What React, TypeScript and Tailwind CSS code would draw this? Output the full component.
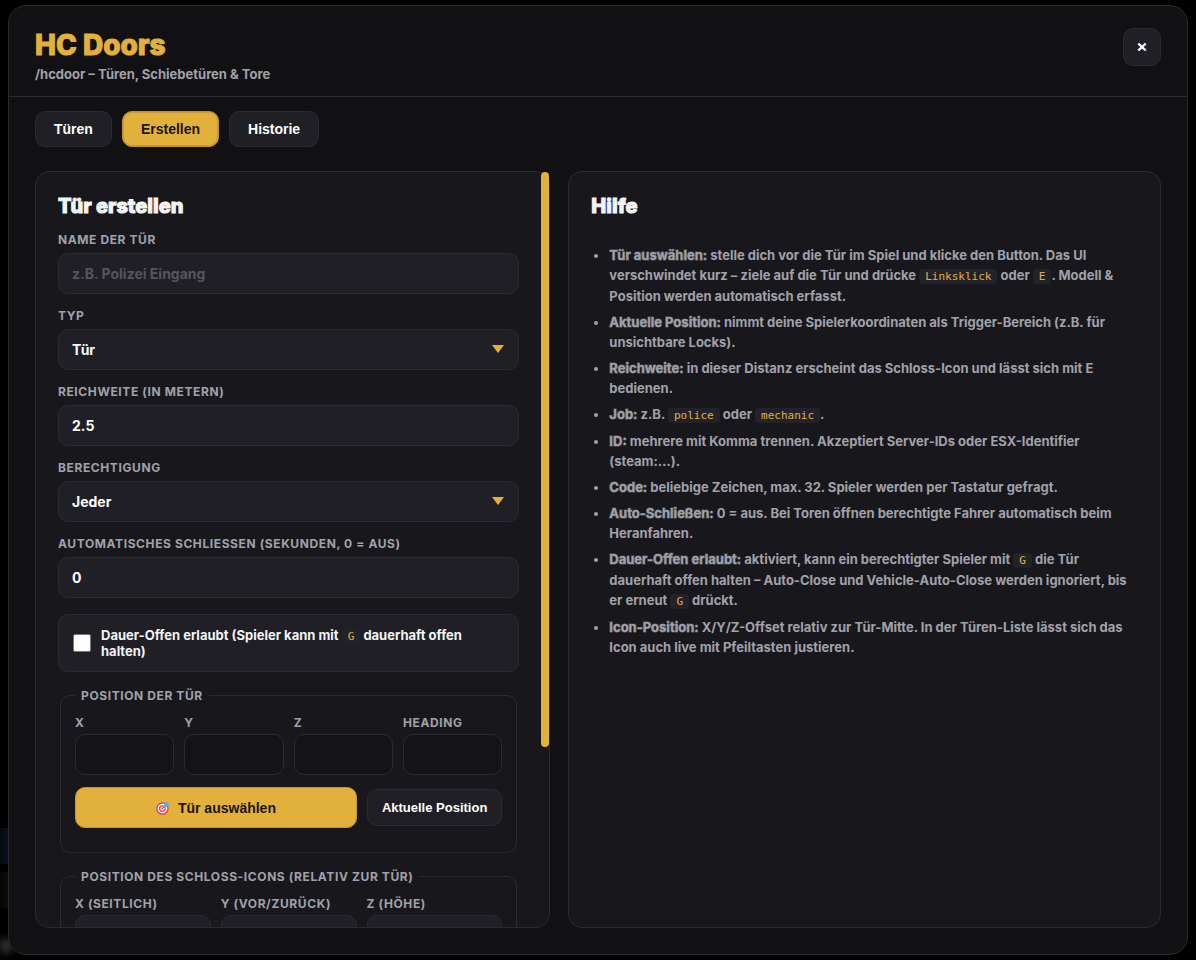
import React, { useState } from 'react';

const labelClass = 'block text-xs leading-[15px] font-bold uppercase tracking-wider text-[#a1a1aa]';
const boxClass =
    'block w-full h-[41px] rounded-[10px] border border-[#2a2a31] px-[13px] text-sm font-bold text-white outline-none placeholder:text-[#55555e]';
const buttonFont = "font-['Liberation_Sans',Arial,sans-serif] font-bold";
const ghostButton = `${buttonFont} rounded-[10px] border border-[#2a2a31] bg-[#1f1f25] text-white`;
const goldButton = `${buttonFont} rounded-[10px] border border-[#c4942c] bg-[#e2b13c] text-[#1a1405]`;

const tabs = ['Türen', 'Erstellen', 'Historie'];

const Code: React.FC<{ children: React.ReactNode }> = ({ children }) => (
    <code className="rounded bg-[#22232a] px-1.5 py-px font-['DejaVu_Sans_Mono',monospace] text-[11px] leading-[18px] font-normal text-[#e2b13c]">
        {children}
    </code>
);

const help = [
    {
        title: 'Tür auswählen:',
        text: (
            <>
                stelle dich vor die Tür im Spiel und klicke den Button. Das UI verschwindet kurz – ziele auf die Tür und
                drücke <Code>Linksklick</Code> oder <Code>E</Code>. Modell &amp; Position werden automatisch erfasst.
            </>
        ),
    },
    { title: 'Aktuelle Position:', text: 'nimmt deine Spielerkoordinaten als Trigger-Bereich (z.B. für unsichtbare Locks).' },
    { title: 'Reichweite:', text: 'in dieser Distanz erscheint das Schloss-Icon und lässt sich mit E bedienen.' },
    {
        title: 'Job:',
        text: (
            <>
                z.B. <Code>police</Code> oder <Code>mechanic</Code>.
            </>
        ),
    },
    { title: 'ID:', text: 'mehrere mit Komma trennen. Akzeptiert Server-IDs oder ESX-Identifier (steam:…).' },
    { title: 'Code:', text: 'beliebige Zeichen, max. 32. Spieler werden per Tastatur gefragt.' },
    { title: 'Auto-Schließen:', text: '0 = aus. Bei Toren öffnen berechtigte Fahrer automatisch beim Heranfahren.' },
    {
        title: 'Dauer-Offen erlaubt:',
        text: (
            <>
                aktiviert, kann ein berechtigter Spieler mit <Code>G</Code> die Tür dauerhaft offen halten – Auto-Close
                und Vehicle-Auto-Close werden ignoriert, bis er erneut <Code>G</Code> drückt.
            </>
        ),
    },
    {
        title: 'Icon-Position:',
        text: 'X/Y/Z-Offset relativ zur Tür-Mitte. In der Türen-Liste lässt sich das Icon auch live mit Pfeiltasten justieren.',
    },
];

const TextField: React.FC<{ id: string; label: string; value?: string; placeholder?: string }> = ({
    id,
    label,
    value,
    placeholder,
}) => (
    <div className="space-y-1.5">
        <label htmlFor={id} className={labelClass}>{label}</label>
        <input id={id} type="text" defaultValue={value} placeholder={placeholder} className={`${boxClass} bg-[#1f1f25]`} />
    </div>
);

const SelectField: React.FC<{ id: string; label: string; option: string }> = ({ id, label, option }) => (
    <div className="space-y-1.5">
        <label htmlFor={id} className={labelClass}>{label}</label>
        <div className="relative">
            <select id={id} className={`${boxClass} appearance-none bg-[#1f1f25]`}>
                <option>{option}</option>
            </select>
            <svg className="pointer-events-none absolute right-[15px] top-4 h-2 w-3" viewBox="0 0 12 8">
                <path d="M0 0h12L6 8z" fill="#e2b13c" />
            </svg>
        </div>
    </div>
);

const SmallField: React.FC<{ id: string; label: string; readOnly?: boolean }> = ({ id, label, readOnly }) => (
    <div className="min-w-0 space-y-1">
        <label htmlFor={id} className={labelClass}>{label}</label>
        <input
            id={id}
            type="text"
            readOnly={readOnly}
            className={`${boxClass} ${readOnly ? 'bg-[#131318]' : 'bg-[#1f1f25]'}`}
        />
    </div>
);

const TargetIcon = () => (
    <svg className="h-3.5 w-3.5" viewBox="0 0 14 14">
        <circle cx="6.4" cy="7.6" r="6.3" fill="#f2403d" />
        <circle cx="6.4" cy="7.6" r="4.8" fill="#fff" />
        <circle cx="6.4" cy="7.6" r="3.4" fill="#f2403d" />
        <circle cx="6.4" cy="7.6" r="2.1" fill="#fff" />
        <circle cx="6.4" cy="7.6" r="1" fill="#f2403d" />
        <path d="M6.4 7.6L10 4" stroke="#4a6f8c" strokeWidth="0.9" />
        <path d="M8 6L8.2 2.8L11 0L11.5 2.4L14 3L11.2 5.8z" fill="#4fb3ea" />
    </svg>
);

const App: React.FC = () => {
    const [active, setActive] = useState('Erstellen');

    return (
        <div className="relative h-screen overflow-hidden bg-black px-2 py-[5px] font-['Inter',sans-serif] font-bold text-[#f4f4f5]">
            {/* dimmed game hud at the screen edge */}
            <div className="absolute bottom-24 left-0 h-9 w-2 bg-linear-to-r from-[#06090b] to-[#04121f]" />
            <div className="absolute bottom-13 left-0 h-9 w-2 bg-linear-to-r from-[#060504] to-[#0e0a05]" />
            <div className="absolute bottom-2 left-0 h-3 w-3 bg-[#3a3a3a] blur-xs" />

            <div className="relative flex h-full flex-col overflow-hidden rounded-[18px] border border-[#2a2a31] bg-[#111113]">
                <header className="flex items-start justify-between border-b border-[#2a2a31] px-[26px] pt-[22px] pb-3.5">
                    <div>
                        <h1 className="text-[28px] leading-[34px] font-extrabold text-[#e2b13c] [-webkit-text-stroke:1px]">HC Doors</h1>
                        <p className="mt-1 text-[13px] leading-4 text-[#a1a1aa]">/hcdoor – Türen, Schiebetüren &amp; Tore</p>
                    </div>
                    <button aria-label="Schließen" className={`flex h-[38px] w-[38px] items-center justify-center ${ghostButton}`}>
                        <svg className="h-2.5 w-2.5" viewBox="0 0 10 10" fill="none" stroke="currentColor" strokeWidth="2.4">
                            <path d="M1.3 1.5l7.4 7M8.7 1.5l-7.4 7" />
                        </svg>
                    </button>
                </header>

                <nav className="flex gap-2.5 px-[26px] pt-3.5 pb-6">
                    {tabs.map((tab) => (
                        <button
                            key={tab}
                            onClick={() => setActive(tab)}
                            className={`h-9 px-[18px] text-sm ${tab === active ? `${goldButton} inset-ring inset-ring-[#c99a30]` : ghostButton}`}
                        >
                            {tab}
                        </button>
                    ))}
                </nav>

                <main className="grid min-h-0 flex-1 grid-cols-[1fr_1.15fr] gap-[18px] px-[26px] pb-[26px]">
                    <section className="relative flex min-h-0 rounded-[14px] border border-[#2a2a31] bg-[#18181c]">
                        <div className="flex-1 overflow-y-auto rounded-[13px] pt-[22px] pr-[30px] pb-[183px] pl-[22px] [scrollbar-width:none]">
                            <h2 className="mb-3.5 text-xl leading-6 font-extrabold [-webkit-text-stroke:1px]">Tür erstellen</h2>
                            <form className="space-y-4">
                                <div className="space-y-3.5">
                                    <TextField id="name" label="Name der Tür" placeholder="z.B. Polizei Eingang" />
                                    <SelectField id="type" label="Typ" option="Tür" />
                                    <TextField id="range" label="Reichweite (in Metern)" value="2.5" />
                                    <SelectField id="access" label="Berechtigung" option="Jeder" />
                                    <TextField id="autoclose" label="Automatisches Schliessen (Sekunden, 0 = aus)" value="0" />
                                </div>

                                <label className="flex items-center gap-2.5 rounded-[10px] border border-[#2a2a31] bg-[#1f1f25] px-3.5 py-3 text-[13px] leading-4">
                                    <input
                                        type="checkbox"
                                        className="h-[18px] w-[18px] shrink-0 appearance-none rounded-xs border border-[#767676] bg-white checked:bg-[#e2b13c]"
                                    />
                                    <span className="[&_code]:leading-3">
                                        Dauer-Offen erlaubt (Spieler kann mit <Code>G</Code> dauerhaft offen halten)
                                    </span>
                                </label>

                                <fieldset className="mx-0.5 rounded-[10px] border border-[#2a2a31] px-3.5 pt-3 pb-6">
                                    <legend className={`px-1.5 ${labelClass}`}>Position der Tür</legend>
                                    <div className="grid grid-cols-4 gap-2.5">
                                        <SmallField id="x" label="X" readOnly />
                                        <SmallField id="y" label="Y" readOnly />
                                        <SmallField id="z" label="Z" readOnly />
                                        <SmallField id="heading" label="Heading" readOnly />
                                    </div>
                                    <div className="mt-3 flex items-center gap-2.5">
                                        <button
                                            type="button"
                                            className={`flex h-[41px] flex-1 items-center justify-center gap-2 text-sm ${goldButton}`}
                                        >
                                            <TargetIcon />
                                            Tür auswählen
                                        </button>
                                        <button type="button" className={`h-[37px] px-3.5 text-[13px] ${ghostButton}`}>
                                            Aktuelle Position
                                        </button>
                                    </div>
                                </fieldset>

                                <fieldset className="mx-0.5 rounded-[10px] border border-[#2a2a31] px-3.5 pt-3 pb-6">
                                    <legend className={`px-1.5 ${labelClass}`}>Position des Schloss-Icons (relativ zur Tür)</legend>
                                    <div className="grid grid-cols-3 gap-2.5">
                                        <SmallField id="icon-x" label="X (seitlich)" />
                                        <SmallField id="icon-y" label="Y (vor/zurück)" />
                                        <SmallField id="icon-z" label="Z (Höhe)" />
                                    </div>
                                </fieldset>
                            </form>
                        </div>
                        <div className="absolute top-0 right-0 h-16/21 w-2 rounded-full bg-[#e2b13c]" />
                    </section>

                    <section className="min-h-0 overflow-y-auto rounded-[14px] border border-[#2a2a31] bg-[#18181c] p-[22px]">
                        <h2 className="mb-[27px] text-xl leading-6 font-extrabold [-webkit-text-stroke:1px]">Hilfe</h2>
                        <ul className="list-disc space-y-1.5 pl-[18px] text-[13px] leading-5 text-[#a1a1aa]">
                            {help.map((item) => (
                                <li key={item.title}>
                                    <b className="font-bold [-webkit-text-stroke:1px_#a1a1aa80]">{item.title}</b> {item.text}
                                </li>
                            ))}
                        </ul>
                    </section>
                </main>
            </div>
        </div>
    );
};

export default App;
